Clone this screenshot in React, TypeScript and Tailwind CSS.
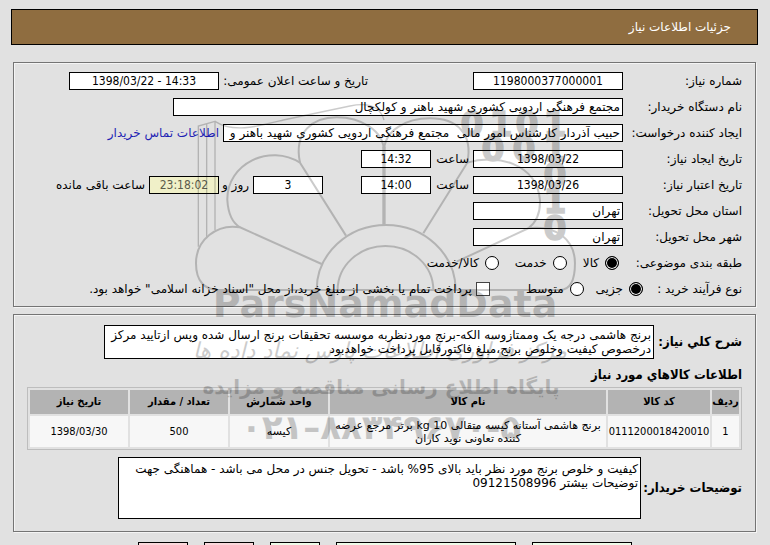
import React from "react";

type FieldProps = {
  id: string;
  value: string;
  label?: string;
  className?: string;
};

const Field = ({ id, value, label, className = "" }: FieldProps) => (
  <input
    id={id}
    type="text"
    readOnly
    aria-label={label}
    defaultValue={value}
    className={`h-[18px] shrink-0 border border-black px-0.5 text-xs outline-none ${className}`}
  />
);

// Centred fields hold numbers and dates, set in the narrower face
const NumberField = ({ className = "bg-white", ...props }: FieldProps) => (
  <Field
    {...props}
    className={`text-center font-['DejaVu_Sans_Condensed',sans-serif] ${className}`}
  />
);

const Row = ({
  label,
  htmlFor,
  children,
}: {
  label: string;
  htmlFor?: string;
  children: React.ReactNode;
}) => (
  <div className="flex h-[26px] items-center whitespace-nowrap">
    {htmlFor ? (
      <label htmlFor={htmlFor} className="w-[119px] shrink-0">
        {label}
      </label>
    ) : (
      <span className="w-[119px] shrink-0">{label}</span>
    )}
    {children}
  </div>
);

const Choice = ({
  name,
  label,
  checked = false,
  className = "",
}: {
  name: string;
  label: string;
  checked?: boolean;
  className?: string;
}) => (
  <label className={`flex items-center gap-1.5 ${className}`}>
    <input
      type="radio"
      name={name}
      defaultChecked={checked}
      className="size-3.5 appearance-none rounded-full border border-black bg-white checked:bg-black checked:shadow-[inset_0_0_0_1px_white]"
    />
    {label}
  </label>
);

const Panel = ({ children }: { children: React.ReactNode }) => (
  <section className="mx-0.5 border border-[#747474] px-[13px] py-[5px] shadow-[inset_1px_1px_0_#f4f4f4,1px_1px_0_#f4f4f4]">
    {children}
  </section>
);

const columns = [
  { title: "ردیف", width: "w-[27px]" },
  { title: "کد کالا", width: "w-[102px]" },
  { title: "نام کالا", width: "w-auto" },
  { title: "واحد شمارش", width: "w-[98px]" },
  { title: "تعداد / مقدار", width: "w-[98px]" },
  { title: "تاریخ نیاز", width: "w-[98px]" },
];

const items = [
  {
    row: "1",
    code: "0111200018420010",
    name: "برنج هاشمی آستانه کیسه متقالی 10 kg برتر مرجع عرضه کننده تعاونی نوید کاران",
    unit: "کیسه",
    quantity: "500",
    date: "1398/03/30",
  },
];

const actions = [
  { name: "تاریخچه", style: "w-[100px] bg-[#eefbe9]" },
  { name: "مشاهده مدارک", style: "w-[180px] bg-[#eefbe9]" },
  { name: "چاپ", style: "w-[50px] bg-[#eefbe9]" },
  { name: "بازگشت", style: "w-[50px] bg-[#fbd9dc]" },
  { name: "خروج", style: "w-[50px] bg-[#fbd9dc]" },
];

const Watermark = () => (
  <svg
    aria-hidden="true"
    viewBox="0 0 390 360"
    className="pointer-events-none absolute top-[90px] left-1/2 h-[360px] w-[390px] -translate-x-1/2 opacity-20"
  >
    <g
      fontFamily="'DejaVu Sans'"
      fontWeight="bold"
      fontSize="33"
      textAnchor="middle"
      stroke="#000"
      strokeWidth="1.5"
    >
      <text x="282" y="46">0</text>
      <text x="311" y="46">1</text>
      <text x="337" y="46">0</text>
      <text x="365" y="46">1</text>
      <text x="303" y="71">0</text>
      <text x="334" y="71">0</text>
      <text x="365" y="71">1</text>
      <text x="365" y="97">0</text>
      <text x="365" y="123">1</text>
      <text x="365" y="150">0</text>
    </g>
    <g transform="scale(0.3333)" fill="none" stroke="#000" strokeWidth="6">
      <path d="M380 600A208.5 195 0 0 1 797 600" />
      <path d="M443 600A143.5 132 0 0 1 730 600" />
      <path d="M395 522L150 412C80 400 18 450 18 520C18 575 45 600 85 600H1110C1140 600 1155 570 1155 520C1155 450 1100 405 1015 415L800 515" />
      <path d="M468 437L330 218C240 160 110 220 112 330C115 380 130 400 150 412" />
      <path d="M330 218C310 125 370 82 440 82C510 82 582 120 582 185C582 120 650 85 720 85C800 85 850 130 832 218L700 430" />
      <path d="M582 170V405" strokeWidth="10" />
      <path d="M832 218C920 190 1040 220 1050 330C1052 375 1035 400 1015 415" />
      <path
        d="M25 470V108L75 94V420M50 445V102M75 94C130 130 200 110 280 90L480 48Q565 30 582 90"
        strokeWidth="4"
      />
    </g>
    <g fontFamily="'DejaVu Sans'" textAnchor="middle">
      <text x="195" y="227" fontSize="38" fontWeight="bold" direction="ltr">
        ParsNamadData
      </text>
      <text x="190" y="268" fontSize="22" fontStyle="italic" direction="rtl">
        مرکز فرآوری اطلاعات پارس نماد داده ها
      </text>
      <text x="191" y="304" fontSize="20" fontWeight="bold" direction="rtl">
        پایگاه اطلاع رسانی مناقصه و مزایده
      </text>
      <text x="191" y="349" fontSize="34" fontWeight="bold" direction="ltr">
        ۰۲۱–۸۸۳۴۹۶۷۰-۵
      </text>
    </g>
  </svg>
);

const App = () => {
  return (
    <div
      dir="rtl"
      className="relative h-screen overflow-hidden bg-[#e1e1e1] ps-3 pe-[11px] pt-[9px] font-['DejaVu_Sans',sans-serif] text-xs text-black"
    >
      {/* Title bar */}
      <header className="flex h-9 items-center border border-black bg-[#8f6d40] px-[26px] text-white">
        <h1>جزئیات اطلاعات نیاز</h1>
      </header>

      {/* Request details */}
      <div className="mt-[17px]">
        <Panel>
          <Row label="شماره نیاز:" htmlFor="number">
            <NumberField id="number" value="1198000377000001" className="w-[150px] bg-white" />
            <label htmlFor="announced" className="ms-[105px] w-[149px] shrink-0">
              تاریخ و ساعت اعلان عمومی:
            </label>
            <NumberField
              id="announced"
              value="1398/03/22 - 14:33"
              className="w-[150px] bg-white [direction:ltr]"
            />
          </Row>
          <Row label="نام دستگاه خریدار:" htmlFor="buyer">
            <Field
              id="buyer"
              value="مجتمع فرهنگی اردویی کشوری شهید باهنر و کولکچال"
              className="w-[450px] bg-white"
            />
          </Row>
          <Row label="ایجاد کننده درخواست:" htmlFor="creator">
            <Field
              id="creator"
              value="حبیب آذردار کارشناس امور مالی  مجتمع فرهنگی اردویی کشوری شهید باهنر و"
              className="w-[400px] bg-white"
            />
            <a href="#contact" className="ms-1 text-[#1f1fb4]">
              اطلاعات تماس خریدار
            </a>
          </Row>
          <Row label="تاریخ ایجاد نیاز:" htmlFor="created">
            <NumberField id="created" value="1398/03/22" className="w-[150px] bg-white" />
            <label htmlFor="created-time" className="ms-1 w-[38px]">
              ساعت
            </label>
            <NumberField id="created-time" value="14:32" className="w-[70px] bg-white" />
          </Row>
          <Row label="تاریخ اعتبار نیاز:" htmlFor="expires">
            <NumberField id="expires" value="1398/03/26" className="w-[150px] bg-white" />
            <label htmlFor="expires-time" className="ms-1 w-[38px]">
              ساعت
            </label>
            <NumberField id="expires-time" value="14:00" className="w-[70px] bg-white" />
            <NumberField id="days" label="روز" value="3" className="ms-[38px] w-[70px] bg-white" />
            <label htmlFor="remaining" className="ms-1 w-[30px]">
              روز و
            </label>
            <NumberField
              id="remaining"
              value="23:18:02"
              className="w-[70px] bg-[#f0f0c8] text-[#5c5c4c]"
            />
            <span className="ms-1">ساعت باقی مانده</span>
          </Row>
          <Row label="استان محل تحویل:" htmlFor="province">
            <Field id="province" value="تهران" className="w-[150px] bg-white" />
          </Row>
          <Row label="شهر محل تحویل:" htmlFor="city">
            <Field id="city" value="تهران" className="w-[150px] bg-white" />
          </Row>
          <Row label="طبقه بندی موضوعی:">
            <Choice name="category" label="کالا" checked className="ms-1" />
            <Choice name="category" label="خدمت" className="ms-4" />
            <Choice name="category" label="کالا/خدمت" className="ms-4" />
          </Row>
          <div className="flex h-[25px] items-center whitespace-nowrap">
            <span className="w-[99px] shrink-0">نوع فرآیند خرید :</span>
            <Choice name="process" label="جزیی" checked />
            <Choice name="process" label="متوسط" className="ms-3" />
            <label className="ms-9 flex items-center gap-1">
              <input
                type="checkbox"
                className="size-3.5 appearance-none border border-[#444] bg-white"
              />
              پرداخت تمام یا بخشی از مبلغ خرید،از محل "اسناد خزانه اسلامی" خواهد بود.
            </label>
          </div>
        </Panel>
      </div>

      {/* Goods */}
      <div className="mt-[7px]">
        <Panel>
          <div className="mt-[5px] flex items-center">
            <label
              htmlFor="summary"
              className="w-[88px] shrink-0 font-['DejaVu_Sans_Condensed',sans-serif] text-[13px] font-bold whitespace-nowrap"
            >
              شرح کلي نياز:
            </label>
            <textarea
              id="summary"
              readOnly
              defaultValue="برنج هاشمی درجه یک وممتازوسه الکه-برنج موردنظربه موسسه تحقیقات برنج ارسال شده وپس ازتایید مرکز درخصوص کیفیت وخلوص برنج،مبلغ فاکتورقابل پرداخت خواهدبود"
              className="me-[77px] block h-[34px] grow resize-none overflow-hidden border border-black bg-white px-0.5 py-0.5 text-xs leading-[14px] outline-none"
            />
          </div>
          <h2 className="mt-2 font-['DejaVu_Sans_Condensed',sans-serif] text-[13px] leading-4 font-bold">
            اطلاعات کالاهاي مورد نياز
          </h2>
          <table className="mt-1 w-full table-fixed border-separate border-spacing-0.5 border border-[#bdbdbd] text-center font-['DejaVu_Sans_Condensed',sans-serif] text-[11px]">
            <thead>
              <tr className="h-6 bg-[#b3b3b3]">
                {columns.map((column) => (
                  <th key={column.title} className={`p-0 whitespace-nowrap ${column.width}`}>
                    {column.title}
                  </th>
                ))}
              </tr>
            </thead>
            <tbody>
              {items.map((item) => (
                <tr key={item.code} className="h-[31px] bg-[#f7f7f7] leading-[13px]">
                  <td className="p-0">{item.row}</td>
                  <td className="p-0">{item.code}</td>
                  <td className="px-1 py-0 font-['DejaVu_Sans',sans-serif]">{item.name}</td>
                  <td className="p-0 font-['DejaVu_Sans',sans-serif]">{item.unit}</td>
                  <td className="p-0">{item.quantity}</td>
                  <td className="p-0">{item.date}</td>
                </tr>
              ))}
            </tbody>
          </table>
          <div className="my-[7px] flex items-center">
            <label
              htmlFor="notes"
              className="w-[101px] shrink-0 font-['DejaVu_Sans_Condensed',sans-serif] text-[13px] font-bold whitespace-nowrap"
            >
              توضیحات خریدار:
            </label>
            <textarea
              id="notes"
              readOnly
              defaultValue="کیفیت و خلوص برنج مورد نظر باید بالای 95% باشد - تحویل جنس در محل می باشد - هماهنگی جهت توضیحات بیشتر 09121508996"
              className="me-[91px] block h-[62px] grow resize-none overflow-hidden border border-black bg-white px-0.5 py-1 text-xs leading-[14px] outline-none"
            />
          </div>
        </Panel>
      </div>

      {/* Actions */}
      <div className="mt-2.5 flex justify-center gap-4">
        {actions.map((action) => (
          <button
            key={action.name}
            type="button"
            aria-label={action.name}
            className={`h-6 border border-black ${action.style}`}
          />
        ))}
      </div>

      <Watermark />
    </div>
  );
};

export default App;
